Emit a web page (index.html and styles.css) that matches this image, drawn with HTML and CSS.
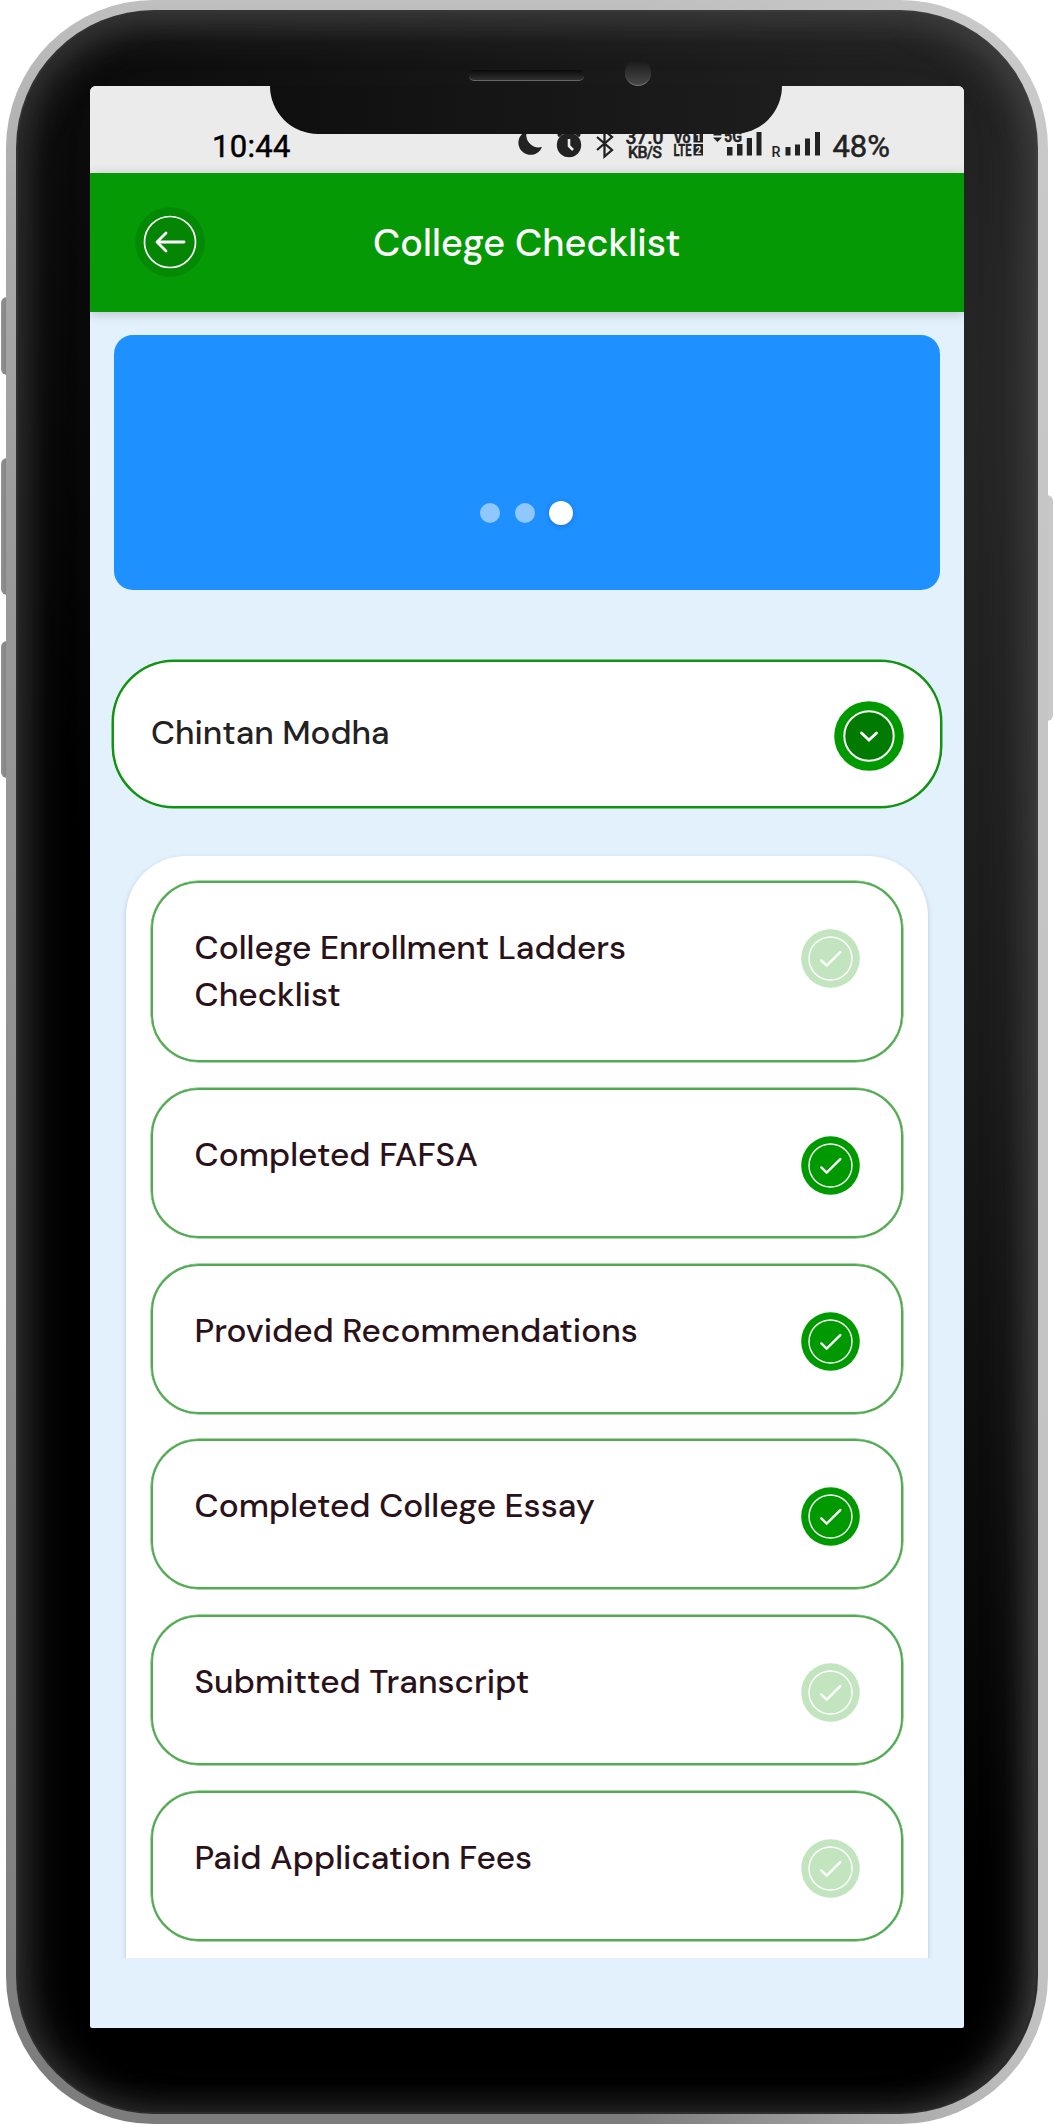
FILE: index.html
```html
<!DOCTYPE html>
<html lang="en">
<head>
<meta charset="utf-8">
<title>College Checklist</title>
<link rel="stylesheet" href="styles.css">
</head>
<body>
<svg class="defs" width="0" height="0" aria-hidden="true">
  <symbol id="check" viewBox="-29.5 -29.5 59 59">
    <circle r="29.3" fill="currentColor"/>
    <circle r="21.5" fill="none" stroke="#fff" stroke-width="1.4"/>
    <path d="M-9.2 1.9L-3.8 7.1L9.8-6.4" fill="none" stroke="#fff" stroke-width="2.4" stroke-linecap="round"/>
  </symbol>
</svg>
<div class="phone">
  <i class="key key-mute"></i><i class="key key-up"></i><i class="key key-down"></i><i class="key key-power"></i>
  <div class="frame"><div class="bezel">
    <div class="screen">
      <div class="status">
        <span class="clock">10:44</span>
        <svg class="signals" width="312" height="50" viewBox="514 120 312 50" fill="#222">
          <path d="M527 132A12.200 12.200 0 1 0 542 148A12.500 12.500 0 0 1 527 132Z"/>
          <circle cx="569" cy="146" r="12.200"/>
          <path d="M558 137l6-4.500M580 137l-6-4.500" stroke="#222" stroke-width="3"/>
          <path d="M569 140v7l4 4" stroke="#ebebeb" stroke-width="2.600" fill="none"/>
          <path d="M597 138l15 13-7.500 6.500v-26l7.500 6.500-15 13" stroke="#222" stroke-width="2.300" fill="none"/>
          <g stroke="#222" stroke-width=".4">
          <text x="625.500" y="145" font-size="19.500" font-weight="500" textLength="38">37.0</text>
          <text x="628" y="159" font-size="16" font-weight="500" textLength="34">KB/S</text>
          <text x="673.500" y="143.500" font-size="16" font-weight="700" textLength="17" lengthAdjust="spacingAndGlyphs">Vo</text>
          <text x="673.500" y="156.500" font-size="16" font-weight="700" textLength="18" lengthAdjust="spacingAndGlyphs">LTE</text>
          <text x="724" y="143" font-size="17" font-weight="700" textLength="18" lengthAdjust="spacingAndGlyphs">5G</text>
          </g>
          <rect x="693.500" y="131" width="9.500" height="12.500"/><rect x="693.500" y="145" width="9.500" height="11.500"/>
          <g fill="#ebebeb" font-weight="700" font-size="10"><text x="695.500" y="142">1</text><text x="695.500" y="154.500">2</text></g>
          <path d="M713 138.500h9l-4.500 4.500zM713.500 134.500h8v2h-8z"/>
          <path d="M727 148h5.500v8.500H727zM737 145h5.500v11.500H737zM746.800 139h5.200v17.500h-5.200zM756.500 133h5v23.500h-5z"/>
          <text x="771.500" y="157.500" font-size="15" font-weight="500" textLength="9" lengthAdjust="spacingAndGlyphs">R</text>
          <path d="M785.500 148h5v8.500h-5zM795 145.500h5v11h-5zM805 139.500h5v17h-5zM815 133h5v23.500h-5z"/>
        </svg>
        <span class="battery">48%</span>
      </div>
      <header class="header">
        <svg class="back" width="70" height="70" viewBox="-35 -35 70 70" fill="none" stroke="#fff">
          <circle r="34.800" fill="#048904" stroke="none"/>
          <circle r="25.500" fill="#048604" stroke-width="1.700"/>
          <path d="M-12 0H14" stroke-width="2.800" stroke-linecap="round"/>
          <path d="M-4-9L-13 0L-4 9" stroke-width="2.800" stroke-linecap="round" stroke-linejoin="round"/>
        </svg>
        <h1 class="title">College Checklist</h1>
      </header>
      <main class="content">
        <section class="banner"><i class="dot"></i><i class="dot"></i><i class="dot active"></i></section>
        <section class="select">
          <span class="name">Chintan Modha</span>
          <svg width="70" height="70" viewBox="-35 -35 70 70" fill="none" stroke="#fff">
            <circle r="34.800" fill="#009900" stroke="none"/>
            <circle r="24.700" fill="#007a00" stroke-width="2"/>
            <path d="M-7.500-3L0 4L7.500-3" stroke-width="2.800" stroke-linecap="round"/>
          </svg>
        </section>
        <section class="panel">
          <article class="card tall"><span class="label">College Enrollment Ladders<br>Checklist</span><svg class="mark"><use href="#check"/></svg></article>
          <article class="card"><span class="label">Completed FAFSA</span><svg class="mark done"><use href="#check"/></svg></article>
          <article class="card"><span class="label">Provided Recommendations</span><svg class="mark done"><use href="#check"/></svg></article>
          <article class="card"><span class="label">Completed College Essay</span><svg class="mark done"><use href="#check"/></svg></article>
          <article class="card"><span class="label">Submitted Transcript</span><svg class="mark"><use href="#check"/></svg></article>
          <article class="card"><span class="label">Paid Application Fees</span><svg class="mark"><use href="#check"/></svg></article>
        </section>
      </main>
    </div>
    <div class="notch"></div>
    <i class="speaker"></i><i class="camera"></i>
  </div></div>
</div>
</body>
</html>
```
FILE: styles.css
```css
* { box-sizing: border-box; }
body { margin: 0; background: #fff; font-family: "DM Sans", "Open Sans", sans-serif; font-weight: 500; }
.defs { position: absolute; }
.phone { position: relative; width: 1054px; height: 2124px; padding: 0 6px; overflow: hidden; }

/* Side buttons */
.key { position: absolute; left: 1px; width: 10px; background: linear-gradient(90deg, #929292, #777); border-radius: 6px 0 0 6px; }
.key-mute { top: 297px; height: 78px; }
.key-up { top: 458px; height: 137px; }
.key-down { top: 641px; height: 137px; }
.key-power { left: auto; right: 1px; top: 495px; height: 226px; background: #c8c8c8; border-radius: 0 6px 6px 0; }

/* Metal frame and glass bezel */
.frame { position: relative; height: 2124px; padding: 10px; border-radius: 148px; background: linear-gradient(90deg, transparent 60%, rgba(205,205,205,.85) 99%), linear-gradient(180deg, #bfbfbf, #aaa 10%, #999 28%, #8a8a8a 70%, #7c7c7c); }
.bezel {
  position: relative; height: 2104px; padding: 74px 72px 0;
  border: 2px solid rgba(90,90,90,.5); border-radius: 138px;
  background:
    radial-gradient(1000px 1500px at 100% 18%, #272727, #1a1a1a 45%, rgba(0,0,0,0)) border-box,
    linear-gradient(#0c0c0c, #000 40%) border-box;
  box-shadow: inset 24px 0 40px -14px #2c2c2c, inset -24px 0 44px -18px #444, inset 0 22px 40px -12px #444, inset 0 -22px 40px -16px #1e1e1e;
}
.screen { width: 874px; height: 1942px; background: #e3f1fd; border-radius: 6px 6px 2px 2px; overflow: hidden; }
.notch { position: absolute; left: 252px; top: 73px; width: 512px; height: 49px; border-radius: 0 0 48px 48px; background: linear-gradient(90deg, #0f0f0f, #1d1d1d); }
.speaker { position: absolute; left: 451px; top: 58px; width: 115px; height: 11px; border-radius: 5px; background: linear-gradient(#0a0a0a, #303030); border-bottom: 1px solid #666; }
.camera { position: absolute; left: 607px; top: 47px; width: 26px; height: 27px; border-radius: 50%; background: linear-gradient(#171717, #484848); border-bottom: 1px solid #777; }

/* Status bar */
.status { display: flex; height: 87px; padding: 33px 74px 0 122px; background: #ebebeb; font-family: Roboto, sans-serif; font-size: 31px; font-weight: 400; color: #222; }
.clock, .battery { height: 50px; line-height: 55px; }
.clock { width: 302px; color: #000; letter-spacing: .3px; -webkit-text-stroke: .5px #000; }
.battery { margin-left: auto; -webkit-text-stroke: .5px #222; }
.signals { flex: none; }

/* App header */
.header { position: relative; z-index: 1; display: flex; align-items: center; height: 139px; padding: 0 45px; background: #059905; box-shadow: 0 2px 11px rgba(0,0,0,.2); }
.back { margin-bottom: 2px; }
.title { width: 307px; margin: 2px 0 0 168px; font-size: 37.8px; font-weight: 500; line-height: 52px; color: #fff; white-space: nowrap; }

/* Page body */
.content { padding: 23px 22px 0; }
.banner { display: flex; justify-content: center; align-items: flex-start; gap: 14.5px; height: 255px; margin: 0 2px; padding: 166px 1px 0 0; background: #1e90ff; border-radius: 19px; }
.dot { width: 20px; height: 20px; margin-top: 2px; border-radius: 50%; background: #8fc7ff; }
.dot.active { width: 24px; height: 24px; margin-top: 0; background: #fff; box-shadow: 0 1px 5px rgba(0,40,90,.25); }
.select { display: flex; justify-content: space-between; height: 148px; margin-top: 70px; padding: 39px 36px 0 37px; background: #fff; border: 2px solid #129312; border-radius: 62px; box-shadow: 0 0 0 .5px #129312; }
.name { font-size: 33.2px; line-height: 64px; color: #222; white-space: nowrap; }
.panel { display: flex; flex-direction: column; gap: 25.75px; height: 1102.5px; margin: 48px 14px 0; padding: 25px 25px 0; background: #fff; border-radius: 60px 60px 0 0; box-shadow: 0 2px 5px rgba(60,90,120,.28); clip-path: inset(-6px -10px 0); }
.card { flex: none; display: flex; justify-content: space-between; height: 150px; padding: 41px 41px 0 41.5px; border: 2px solid #52aa52; border-radius: 48px; box-shadow: 0 0 0 .5px #52aa52; }
.card.tall { height: 181px; }
.label { font-size: 33.4px; line-height: 47px; color: #2a121a; white-space: nowrap; }
.mark { flex: none; width: 59px; height: 59px; margin-top: 5px; color: #c2e5bf; }
.mark.done { color: #009900; }
```
